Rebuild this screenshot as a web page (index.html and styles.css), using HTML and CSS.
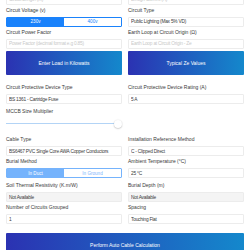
FILE: index.html
```html
<!DOCTYPE html>
<html lang="en">
  <head>
    <meta charset="UTF-8" />
    <meta name="viewport" content="width=device-width, initial-scale=1.0" />
    <title>Cable Calculator</title>
    <link rel="stylesheet" href="styles.css">
  </head>
  <body>
    <div class="page">
      <div class="grid">
        <div class="field">
          <label>Circuit Length (m)</label>
          <input type="text" placeholder="Circuit Length (m)" />
        </div>
        <div class="field">
          <label>Design Current (A)</label>
          <input type="text" placeholder="Design Current (A)" />
        </div>

        <div class="field">
          <label>Circuit Voltage (v)</label>
          <div class="segmented">
            <span class="on">230v</span>
            <span>400v</span>
          </div>
        </div>
        <div class="field">
          <label>Circuit Type</label>
          <input type="text" value="Public Lighting (Max 5% VD)" readonly />
        </div>

        <div class="field">
          <label>Circuit Power Factor</label>
          <input type="text" placeholder="Power Factor (decimal format e.g 0.85)" />
        </div>
        <div class="field">
          <label>Earth Loop at Circuit Origin (Ω)</label>
          <input type="text" placeholder="Earth Loop at Circuit Origin - Ze" />
        </div>

        <div class="btn-row"><button class="btn">Enter Load in Kilowatts</button></div>
        <div class="btn-row"><button class="btn">Typical Ze Values</button></div>

        <div class="field">
          <label>Circuit Protective Device Type</label>
          <input type="text" value="BS 1361 - Cartridge Fuse" readonly />
        </div>
        <div class="field">
          <label>Circuit Protective Device Rating (A)</label>
          <input type="text" value="5 A" readonly />
        </div>

        <div class="field slider-field">
          <label>MCCB Size Multiplier</label>
          <input type="range" class="slider" min="1" max="10" value="10" />
        </div>
        <div class="slider-field"></div>

        <div class="field">
          <label>Cable Type</label>
          <input type="text" value="BS6467 PVC Single Core AWA Copper Conductors" readonly />
        </div>
        <div class="field">
          <label>Installation Reference Method</label>
          <input type="text" value="C - Clipped Direct" readonly />
        </div>

        <div class="field wide-gap">
          <label>Burial Method</label>
          <div class="segmented off">
            <span class="on">In Duct</span>
            <span>In Ground</span>
          </div>
        </div>
        <div class="field wide-gap">
          <label>Ambient Temperature (°C)</label>
          <input type="text" value="25 °C" readonly />
        </div>

        <div class="field">
          <label>Soil Thermal Resistivity (K.m/W)</label>
          <input type="text" class="disabled" value="Not Available" readonly />
        </div>
        <div class="field">
          <label>Burial Depth (m)</label>
          <input type="text" class="disabled" value="Not Available" readonly />
        </div>

        <div class="field last">
          <label>Number of Circuits Grouped</label>
          <input type="text" value="1" readonly />
        </div>
        <div class="field last">
          <label>Spacing</label>
          <input type="text" value="Touching Flat" readonly />
        </div>

        <div class="full"><button class="btn">Perform Auto Cable Calculation</button></div>
      </div>
    </div>
  </body>
</html>
```

FILE: styles.css
```css
body {
  margin: 0;
  font-family: "Liberation Sans", Arial, sans-serif;
  color: #3a3a3a;
  background: #fff;
}
.page {
  margin-top: -15.5px;
  padding: 0 6px;
}
.grid {
  display: grid;
  grid-template-columns: 1fr 1fr;
  column-gap: 6px;
}
.field {
  margin-bottom: 2px;
}
.field label {
  display: block;
  font-size: 5px;
  line-height: 7px;
  margin-bottom: 3px;
}
.field input[type="text"] {
  display: block;
  width: 100%;
  height: 10px;
  box-sizing: border-box;
  margin: 0;
  border: 1px solid #ececec;
  border-radius: 1px;
  padding: 0 2px;
  font: 4.8px "Liberation Sans", Arial, sans-serif;
  letter-spacing: -0.22px;
  color: #3a3a3a;
  background: #fff;
  outline: none;
}
.field input::placeholder {
  color: #c9c9c9;
}
.field input.disabled {
  background: #f4f4f4;
}
.segmented {
  display: flex;
  height: 10px;
  box-sizing: border-box;
  border: 1px solid #1a82fb;
  border-radius: 1px;
  font-size: 4.6px;
}
.segmented span {
  flex: 1;
  display: flex;
  align-items: center;
  justify-content: center;
  color: #1a82fb;
}
.segmented span.on {
  background: #1a82fb;
  color: #fff;
}
.segmented.off {
  opacity: 0.6;
}
.btn-row {
  margin-bottom: 9.5px;
}
.btn {
  display: flex;
  align-items: center;
  justify-content: center;
  width: 100%;
  height: 24px;
  border: 0;
  border-radius: 1px;
  padding: 0;
  background: linear-gradient(to right, #2b32b2, #1488cc);
  color: #fff;
  font: 5px "Liberation Sans", Arial, sans-serif;
}
.slider-field {
  margin-top: 2px;
  margin-bottom: 7px;
}
.slider {
  -webkit-appearance: none;
  appearance: none;
  display: block;
  width: 100%;
  height: 11px;
  margin: 0;
  background: transparent;
}
.slider::-webkit-slider-runnable-track {
  height: 1px;
  background: #b3d4f6;
}
.slider::-webkit-slider-thumb {
  -webkit-appearance: none;
  width: 8px;
  height: 8px;
  margin-top: -3.5px;
  border-radius: 50%;
  background: #fff;
  box-shadow: 0 0.5px 1.5px rgba(0, 0, 0, 0.3);
}
.wide-gap {
  margin-bottom: 4px;
}
.last {
  margin-bottom: 8.5px;
}
.full {
  grid-column: 1 / -1;
}
```
